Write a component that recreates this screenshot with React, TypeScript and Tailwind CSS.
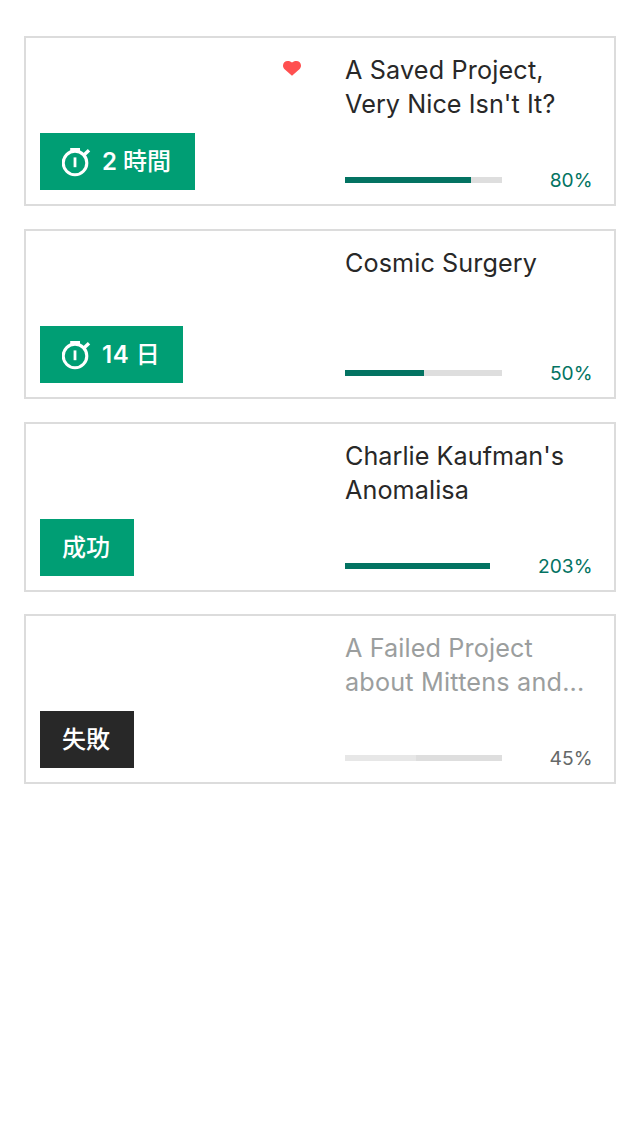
import React from "react";

type Line = { text: string; spacing: string };
type Project = {
  title: Line[];
  badge: React.ReactNode;
  badgeClass: string;
  timer?: boolean;
  saved?: boolean;
  percent: string;
  trackClass: string;
  fillClass: string;
  fill: number;
  titleColor: string;
  percentColor: string;
  margin: string;
};

const GREEN = "bg-[#009e74]";

const projects: Project[] = [
  {
    title: [
      { text: "A Saved Project,", spacing: "tracking-[0.16px]" },
      { text: "Very Nice Isn't It?", spacing: "tracking-[0.06px]" },
    ],
    badge: <><span className="font-semibold">2</span><span className="ml-[6px]">時間</span></>,
    badgeClass: `${GREEN} w-[155px]`,
    timer: true,
    saved: true,
    percent: "80%",
    trackClass: "w-[157px] bg-[#dedede]",
    fillClass: "bg-[#037362]",
    fill: 125.6,
    titleColor: "text-[#282828]",
    percentColor: "text-[#037362]",
    margin: "mt-[36px]",
  },
  {
    title: [{ text: "Cosmic Surgery", spacing: "tracking-[0.09px]" }],
    badge: <><span className="font-semibold tracking-[0.6px]">14</span><span className="ml-[6.5px]">日</span></>,
    badgeClass: `${GREEN} w-[143px]`,
    timer: true,
    percent: "50%",
    trackClass: "w-[157px] bg-[#dedede]",
    fillClass: "bg-[#037362]",
    fill: 78.5,
    titleColor: "text-[#282828]",
    percentColor: "text-[#037362]",
    margin: "mt-[23px]",
  },
  {
    title: [
      { text: "Charlie Kaufman's", spacing: "tracking-[0.04px]" },
      { text: "Anomalisa", spacing: "tracking-[0.08px]" },
    ],
    badge: "成功",
    badgeClass: `${GREEN} w-[94px]`,
    percent: "203%",
    trackClass: "w-[145px] bg-[#dedede]",
    fillClass: "bg-[#037362]",
    fill: 145,
    titleColor: "text-[#282828]",
    percentColor: "text-[#037362]",
    margin: "mt-[23px]",
  },
  {
    title: [
      { text: "A Failed Project", spacing: "tracking-[0.12px]" },
      { text: "about Mittens and...", spacing: "tracking-[0.2px]" },
    ],
    badge: "失敗",
    badgeClass: "bg-[#282828] w-[94px]",
    percent: "45%",
    trackClass: "w-[157px] bg-[#dedede]",
    fillClass: "bg-[#e7e7e7]",
    fill: 70.65,
    titleColor: "text-[#9b9e9e]",
    percentColor: "text-[#656868]",
    margin: "mt-[22px]",
  },
];

function TimerIcon() {
  return (
    <svg className="mr-[11px] h-[30px] w-[29px] shrink-0" viewBox="0 0 29 30" fill="none" stroke="#fff">
      <circle cx="13" cy="15.9" r="11.8" strokeWidth="3.1" />
      <path d="M8.2 2.7h9.8" strokeWidth="3.4" />
      <path d="M13 10.4v9.8" strokeWidth="2.8" />
      <path d="M22.2 7.8l4.8-4.6" strokeWidth="3.4" />
    </svg>
  );
}

function HeartIcon() {
  return (
    <svg className="mt-[23px] ml-auto mr-[44px] h-[15px] w-[18px]" viewBox="0 0 18 15">
      <path
        fill="#ff5050"
        d="M9 14.8L1.6 8.2C0.6 7.2 0 6.2 0 4.5C0 1.8 2 0 4.7 0C6.5 0 8 0.5 9 1.6C10 0.5 11.5 0 13.3 0C16 0 18 1.8 18 4.5C18 6.2 17.4 7.2 16.4 8.2Z"
      />
    </svg>
  );
}

function Card({ project: p }: { project: Project }) {
  return (
    <article className={`flex h-[170px] w-[592px] border-2 border-[#dcdcdc] ${p.margin}`}>
      <div className="flex w-[319px] flex-col justify-between pb-[14px] pl-[14px]">
        {p.saved ? <HeartIcon /> : <div />}
        <div className={`flex h-[57px] items-center whitespace-nowrap pl-[22px] text-[24px] leading-[30px] text-white font-medium ${p.badgeClass}`}>
          {p.timer && <TimerIcon />}
          {p.badge}
        </div>
      </div>
      <div className="flex flex-1 flex-col justify-between pt-[15px] pr-[21.5px]">
        <h2 className={`text-[25.2px] leading-[34px] whitespace-nowrap ${p.titleColor}`}>
          {p.title.map((l) => (
            <span key={l.text} className={`block ${l.spacing}`}>{l.text}</span>
          ))}
        </h2>
        <div className="mb-[12px] flex h-[24px] items-center justify-between">
          <div className={`h-[6px] ${p.trackClass}`}>
            <div className={`h-full ${p.fillClass}`} style={{ width: p.fill }} />
          </div>
          <span className={`text-[19.2px] leading-[24px] ${p.percentColor}`}>{p.percent}</span>
        </div>
      </div>
    </article>
  );
}

export default function App() {
  return (
    <main className="flex h-[1136px] w-[640px] flex-col bg-white pl-[24px] font-['Inter','Noto_Sans_CJK_JP',sans-serif]">
      {projects.map((p) => (
        <Card key={p.percent} project={p} />
      ))}
    </main>
  );
}
